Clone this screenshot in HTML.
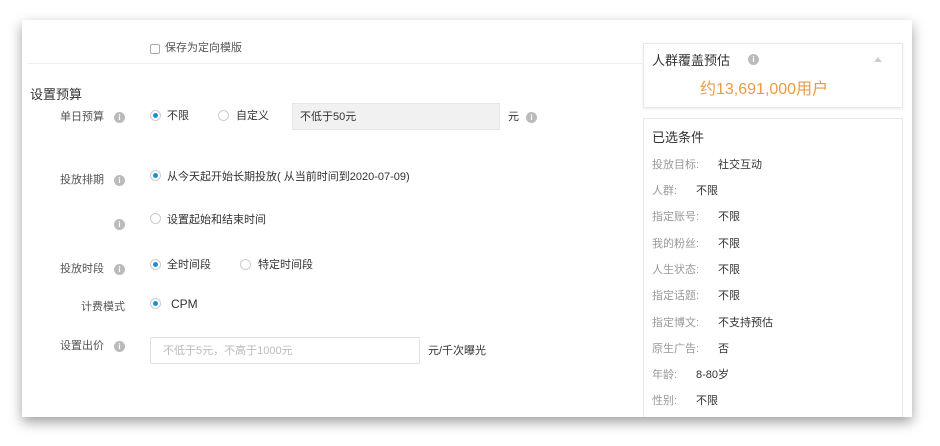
<!DOCTYPE html>
<html><head><meta charset="utf-8"><style>
body{margin:0;width:940px;height:446px;background:#fff;position:relative;overflow:hidden;font-family:"Liberation Sans","Noto Sans CJK SC",sans-serif;color:#333}
.a{position:absolute;white-space:nowrap}
.card{position:absolute;left:22px;top:20px;width:890px;height:397px;background:#fff;box-shadow:0 5px 12px rgba(0,0,0,.38)}
.s{font-size:11px;line-height:14px}
.lab{font-size:11px;color:#555;text-align:right;width:94px;left:10px}
.i{width:11px;height:11px;border-radius:50%;background:#bbb;color:#fff;font-size:8px;line-height:11px;text-align:center;font-weight:bold}
.r{width:11px;height:11px;border-radius:50%;border:1px solid #ccc;background:#fff;box-sizing:border-box}
.r.on::after{content:"";position:absolute;left:2px;top:2px;width:5px;height:5px;border-radius:50%;background:#1a8fd6}
.k{color:#999;font-size:11px}
.v{font-size:11px;color:#333}
</style></head><body>
<div class="card"></div>
<div class="a" style="left:28px;top:63px;width:614px;height:1px;background:#eee"></div>
<div class="a" style="left:150px;top:44px;width:10px;height:10px;border:1px solid #aaa;border-radius:2px;box-sizing:border-box"></div>
<div class="a s" style="left:165px;top:41px;color:#555">保存为定向模版</div>
<div class="a" style="left:30px;top:84px;font-size:13px">设置预算</div>

<div class="a lab s" style="top:110px">单日预算</div><div class="a i" style="left:114px;top:112px">i</div>
<div class="a r on" style="left:150px;top:110px"></div><div class="a s" style="left:167px;top:109px">不限</div>
<div class="a r" style="left:218px;top:110px"></div><div class="a s" style="left:236px;top:109px">自定义</div>
<div class="a" style="left:292px;top:103px;width:208px;height:27px;background:#f1f1f1;border:1px solid #e6e6e6;box-sizing:border-box"></div>
<div class="a s" style="left:300px;top:110px">不低于50元</div>
<div class="a s" style="left:508px;top:110px">元</div><div class="a i" style="left:526px;top:112px">i</div>

<div class="a lab s" style="top:173px">投放排期</div><div class="a i" style="left:114px;top:175px">i</div>
<div class="a r on" style="left:150px;top:170px"></div><div class="a s" style="left:167px;top:170px">从今天起开始长期投放( 从当前时间到2020-07-09)</div>

<div class="a i" style="left:114px;top:219px">i</div>
<div class="a r" style="left:150px;top:213px"></div><div class="a s" style="left:167px;top:213px">设置起始和结束时间</div>

<div class="a lab s" style="top:262px">投放时段</div><div class="a i" style="left:114px;top:264px">i</div>
<div class="a r on" style="left:150px;top:259px"></div><div class="a s" style="left:167px;top:258px">全时间段</div>
<div class="a r" style="left:240px;top:259px"></div><div class="a s" style="left:258px;top:258px">特定时间段</div>

<div class="a lab s" style="top:300px;width:115px">计费模式</div>
<div class="a r on" style="left:150px;top:298px"></div><div class="a" style="left:171px;top:297px;font-size:12px">CPM</div>

<div class="a lab s" style="top:339px">设置出价</div><div class="a i" style="left:114px;top:341px">i</div>
<div class="a" style="left:150px;top:337px;width:270px;height:27px;border:1px solid #e0e0e0;border-radius:2px;box-sizing:border-box"></div>
<div class="a s" style="left:163px;top:344px;color:#bbb">不低于5元，不高于1000元</div>
<div class="a s" style="left:428px;top:344px">元/千次曝光</div>

<div class="a" style="left:643px;top:43px;width:260px;height:65px;border:1px solid #e8e8e8;box-shadow:0 1px 3px rgba(0,0,0,.08);box-sizing:border-box"></div>
<div class="a" style="left:652px;top:50px;font-size:13px">人群覆盖预估</div><div class="a i" style="left:748px;top:54px">i</div>
<div class="a" style="left:874px;top:57px;width:0;height:0;border-left:4px solid transparent;border-right:4px solid transparent;border-bottom:5px solid #ccc"></div>
<div class="a" style="left:700px;top:75px;font-size:16px;color:#ea9a45">约13,691,000用户</div>

<div class="a" style="left:643px;top:118px;width:260px;height:299px;border:1px solid #e8e8e8;border-bottom:none;box-sizing:border-box"></div>
<div class="a" style="left:652px;top:127px;font-size:13px">已选条件</div>
<div class="a k" style="left:652px;top:156px">投放目标:</div><div class="a v" style="left:718px;top:156px">社交互动</div>
<div class="a k" style="left:652px;top:182px">人群:</div><div class="a v" style="left:696px;top:182px">不限</div>
<div class="a k" style="left:652px;top:208px">指定账号:</div><div class="a v" style="left:718px;top:208px">不限</div>
<div class="a k" style="left:652px;top:235px">我的粉丝:</div><div class="a v" style="left:718px;top:235px">不限</div>
<div class="a k" style="left:652px;top:261px">人生状态:</div><div class="a v" style="left:718px;top:261px">不限</div>
<div class="a k" style="left:652px;top:287px">指定话题:</div><div class="a v" style="left:718px;top:287px">不限</div>
<div class="a k" style="left:652px;top:314px">指定博文:</div><div class="a v" style="left:718px;top:314px">不支持预估</div>
<div class="a k" style="left:652px;top:340px">原生广告:</div><div class="a v" style="left:718px;top:340px">否</div>
<div class="a k" style="left:652px;top:366px">年龄:</div><div class="a v" style="left:696px;top:366px">8-80岁</div>
<div class="a k" style="left:652px;top:392px">性别:</div><div class="a v" style="left:696px;top:392px">不限</div>
</body></html>
